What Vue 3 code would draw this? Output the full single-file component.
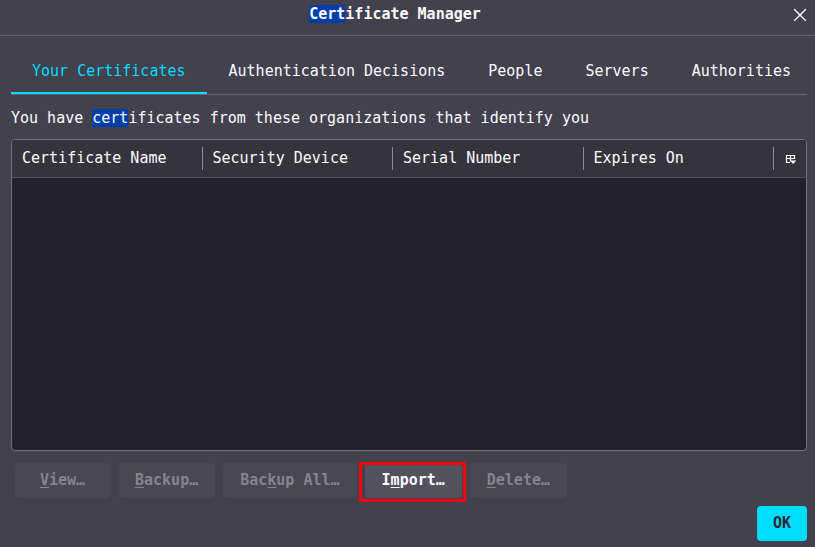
<script setup>
import { ref } from 'vue'

const tabs = ['Your Certificates', 'Authentication Decisions', 'People', 'Servers', 'Authorities']
const active = ref(0)
const columns = ['Certificate Name', 'Security Device', 'Serial Number', 'Expires On']
const actions = [
  { before: '', key: 'V', after: 'iew…', disabled: true },
  { before: '', key: 'B', after: 'ackup…', disabled: true },
  { before: 'Bac', key: 'k', after: 'up All…', disabled: true },
  { before: 'I', key: 'm', after: 'port…', disabled: false, marked: true },
  { before: '', key: 'D', after: 'elete…', disabled: true }
]
</script>

<template>
  <main class="dialog">
    <header class="titlebar">
      <h1 class="title"><mark class="hit">Cert</mark>ificate Manager</h1>
      <button class="close" type="button" aria-label="Close">
        <svg width="14" height="14" viewBox="0 0 14 14" fill="none" stroke="currentColor" stroke-width="1.4" stroke-linecap="round">
          <path d="M1.5 2.5l11 11M12.5 2.5l-11 11" />
        </svg>
      </button>
    </header>

    <section class="content">
      <nav class="tabs" role="tablist">
        <button
          v-for="(tab, i) in tabs"
          :key="tab"
          type="button"
          role="tab"
          class="tab"
          :class="{ active: active === i }"
          :aria-selected="active === i"
          @click="active = i"
        >{{ tab }}</button>
      </nav>

      <p class="intro">You have <mark class="hit">cert</mark>ificates from these organizations that identify you</p>

      <div class="list">
        <table class="grid">
          <thead>
            <tr>
              <th v-for="column in columns" :key="column" scope="col"><span class="cell">{{ column }}</span></th>
              <th class="picker-cell" scope="col">
                <button class="picker" type="button" aria-label="Choose columns">
                  <svg width="12" height="12" viewBox="0 0 12 12">
                    <path d="M6 9.5H2.5v-7h8V6M2 5.5h9M6.5 2.5v6" fill="none" stroke="currentColor" stroke-width="1.2" />
                    <path d="M6 7.5h6.4l-3.2 3.5z" fill="currentColor" />
                  </svg>
                </button>
              </th>
            </tr>
          </thead>
          <tbody></tbody>
        </table>
      </div>

      <div class="actions">
        <button
          v-for="action in actions"
          :key="action.key"
          type="button"
          class="action"
          :class="{ marked: action.marked }"
          :disabled="action.disabled"
        >{{ action.before }}<u>{{ action.key }}</u>{{ action.after }}</button>
      </div>

      <footer class="footer">
        <button class="ok" type="button">OK</button>
      </footer>
    </section>
  </main>
</template>

<style>
body {
  margin: 0;
  background: #42414d;
}
</style>

<style scoped>
.dialog {
  display: flex;
  flex-direction: column;
  box-sizing: border-box;
  min-height: 100vh;
  overflow: hidden;
  background: #42414d;
  color: #fbfbfe;
  font: 15px/20px "DejaVu Sans Mono", monospace;
}
button {
  margin: 0;
  padding: 0;
  border: 0;
  background: none;
  color: inherit;
  font: inherit;
}
.titlebar {
  display: flex;
  align-items: center;
  padding: 4px 8px 11px 0;
  border-bottom: 1px solid #65646f;
}
.title {
  flex: 1;
  margin: 0;
  padding-right: 3px;
  font-size: 15px;
  line-height: 20px;
  font-weight: 700;
  text-align: center;
}
.hit {
  background: #003eaa;
  color: inherit;
}
.close {
  display: flex;
}
.content {
  display: flex;
  flex: 1;
  flex-direction: column;
  padding: 12px 8px 6px 11px;
}
.tabs {
  display: flex;
  gap: 1px;
  border-bottom: 1px solid #65646f;
}
.tab {
  padding: 13px 21px 11px;
  border-bottom: 2px solid transparent;
  white-space: nowrap;
}
.tab.active {
  border-color: #00ddff;
  color: #00ddff;
}
.intro {
  margin: 13px 0 11px;
}
.list {
  flex: 1;
  border: 1px solid #74737d;
  border-radius: 4px;
  background: #23222b;
  overflow: hidden;
}
.grid {
  width: 100%;
  table-layout: fixed;
  border-collapse: collapse;
  background: #35343d;
}
th {
  padding: 7px 0;
  border-bottom: 1px solid #53525b;
  font-weight: 400;
  text-align: left;
}
.cell {
  display: block;
  padding: 1px 10px 2px;
  border-right: 1px solid #8a8992;
}
.picker-cell {
  width: 32px;
}
.picker {
  display: flex;
  margin: 0 auto;
}
.actions {
  display: flex;
  gap: 8px;
  padding: 12px 4px 8px;
}
.action {
  position: relative;
  min-width: 95px;
  padding: 7px 17px 8px;
  border-radius: 4px;
  background: #52515d;
  font-weight: 700;
  white-space: nowrap;
}
.action:disabled {
  background: #484752;
  color: #85848d;
}
.action u {
  text-underline-offset: 2px;
  text-decoration-thickness: 1px;
}
.marked::after {
  content: "";
  position: absolute;
  inset: -1px -4px -4px -6px;
  border: 3px solid #f00606;
}
.footer {
  display: flex;
  justify-content: flex-end;
}
.ok {
  padding: 7px 16px 8px;
  border-radius: 4px;
  background: #00ddff;
  color: #2b2a33;
  font-weight: 700;
}
</style>
